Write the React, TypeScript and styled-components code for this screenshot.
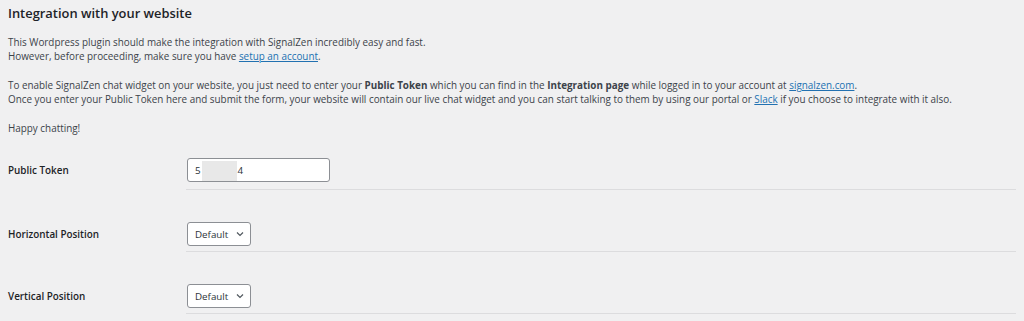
import styled, { createGlobalStyle } from 'styled-components';

const GlobalStyle = createGlobalStyle`
  html, body {
    margin: 0;
    padding: 0;
    background: #f0f0f1;
  }
  body {
    font-family: "Open Sans", "Noto Sans", sans-serif;
    color: #3c434a;
  }
`;

const Page = styled.div`
  padding: 3px 8px 0 8px;
`;

const Title = styled.h2`
  margin: 0 0 12px 0;
  font-size: 12.9px;
  font-weight: 600;
  line-height: 20px;
  color: #1d2327;
`;

const Para = styled.p`
  margin: 0 0 15px 0;
  font-size: 9.9px;
  line-height: 14px;
`;

const Link = styled.a`
  color: #2271b1;
  text-decoration: underline;
`;

const Form = styled.div`
  display: grid;
  grid-template-columns: 178px 1fr;
  margin-top: 23px;
`;

const Label = styled.div<{ $first?: boolean }>`
  display: flex;
  align-items: flex-end;
  padding-bottom: ${(p) => (p.$first ? '13px' : '11px')};
  font-size: 9.9px;
  font-weight: 600;
  color: #1d2327;
  line-height: 14px;
`;

const Field = styled.div<{ $first?: boolean }>`
  padding: ${(p) => (p.$first ? '0 0 7px 1px' : '32px 0 5px 1px')};
  border-bottom: 1px solid #dcdcde;
`;

const TokenBox = styled.div`
  position: relative;
  width: 143px;
  height: 24px;
  box-sizing: border-box;
  border: 1px solid #8c8f94;
  border-radius: 3px;
  background: #fff;
  display: flex;
  align-items: center;
  padding-left: 7px;
  font-size: 9.8px;
  color: #2c3338;
`;

const Mask = styled.span`
  position: absolute;
  left: 14px;
  top: 2px;
  width: 35px;
  height: 20px;
  background: #e8e8e8;
`;

const Select = styled.div`
  width: 64px;
  height: 24px;
  box-sizing: border-box;
  border: 1px solid #8c8f94;
  border-radius: 3px;
  background: #fff;
  display: flex;
  align-items: center;
  justify-content: space-between;
  padding: 0 6px 0 7px;
  font-size: 9.8px;
  color: #2c3338;
`;

const Chevron = () => (
  <svg width="8" height="6" viewBox="0 0 8 6">
    <path d="M1 1.5 L4 4.5 L7 1.5" fill="none" stroke="#50575e" strokeWidth="1.2" />
  </svg>
);

const App = () => (
  <>
    <GlobalStyle />
    <Page>
      <Title>Integration with your website</Title>
      <Para>
        This Wordpress plugin should make the integration with SignalZen incredibly easy and fast.
        <br />
        However, before proceeding, make sure you have <Link href="#">setup an account</Link>.
      </Para>
      <Para>
        To enable SignalZen chat widget on your website, you just need to enter your <b>Public Token</b> which
        you can find in the <b>Integration page</b> while logged in to your account at{' '}
        <Link href="#">signalzen.com</Link>.
        <br />
        Once you enter your Public Token here and submit the form, your website will contain our live chat
        widget and you can start talking to them by using our portal or <Link href="#">Slack</Link> if you
        choose to integrate with it also.
      </Para>
      <Para>Happy chatting!</Para>
      <Form>
        <Label $first>Public Token</Label>
        <Field $first>
          <TokenBox>
            5<Mask />
            <span style={{ marginLeft: 37 }}>4</span>
          </TokenBox>
        </Field>
        <Label>Horizontal Position</Label>
        <Field>
          <Select>
            Default <Chevron />
          </Select>
        </Field>
        <Label>Vertical Position</Label>
        <Field>
          <Select>
            Default <Chevron />
          </Select>
        </Field>
      </Form>
    </Page>
  </>
);

export default App;
